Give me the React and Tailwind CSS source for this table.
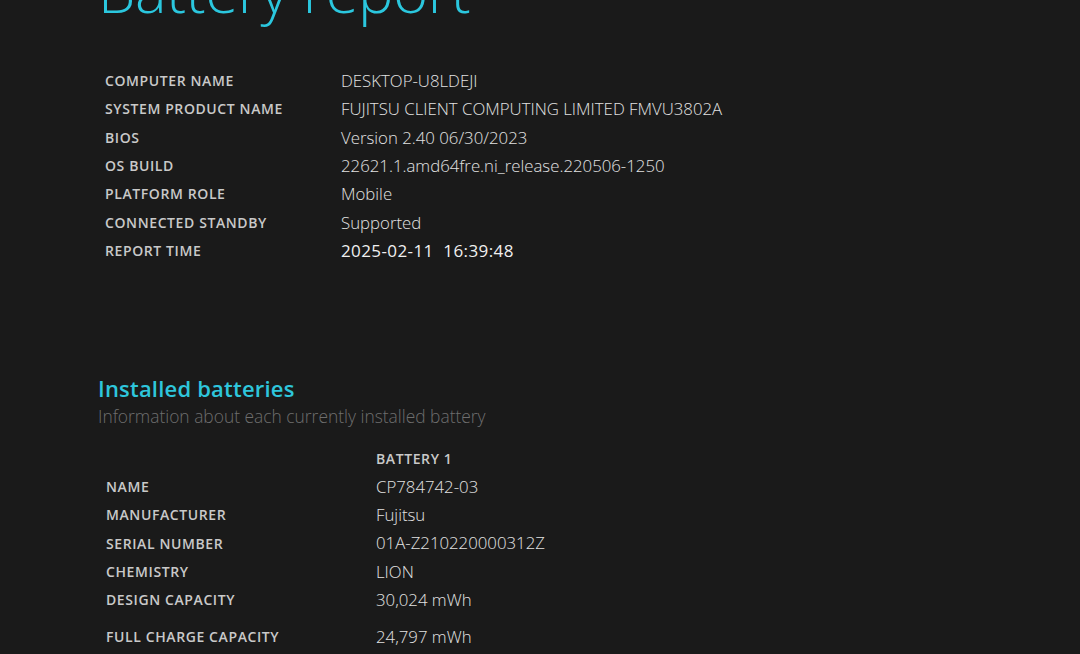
export default function App() {
  const info = [
    ["COMPUTER NAME", "DESKTOP-U8LDEJI"],
    ["SYSTEM PRODUCT NAME", "FUJITSU CLIENT COMPUTING LIMITED FMVU3802A"],
    ["BIOS", "Version 2.40 06/30/2023"],
    ["OS BUILD", "22621.1.amd64fre.ni_release.220506-1250"],
    ["PLATFORM ROLE", "Mobile"],
    ["CONNECTED STANDBY", "Supported"],
  ];
  const bat = [
    ["NAME", "CP784742-03"],
    ["MANUFACTURER", "Fujitsu"],
    ["SERIAL NUMBER", "01A-Z210220000312Z"],
    ["CHEMISTRY", "LION"],
    ["DESIGN CAPACITY", "30,024 mWh"],
  ];
  const lab = "text-[14px] font-semibold text-[#c9c9c9] tracking-[0.6px]";
  const val = "text-[16.8px] font-light text-[#e2e2e2]";
  return (
    <div className="w-[1080px] h-[654px] overflow-hidden bg-[#1a1a1a] font-['Open_Sans',sans-serif]">
      <div className="pl-[98px]">
        <h1 className="text-[59.5px] leading-[59.5px] font-light text-[#2bc7de] mt-[-40px] tracking-[-0.3px]">Battery report</h1>
        <div className="mt-[47px] pl-[7px] flex flex-col">
          {info.map(([k, v]) => (
            <div key={k} className="flex items-center h-[28.3px]">
              <div className={"w-[236px] " + lab}>{k}</div>
              <div className={val}>{v}</div>
            </div>
          ))}
          <div className="flex items-center h-[28.3px]">
            <div className={"w-[236px] " + lab}>REPORT TIME</div>
            <div className="text-[17px] font-medium text-[#f0f0f0] tracking-[0.4px] whitespace-pre">2025-02-11  16:39:48</div>
          </div>
        </div>
        <h2 className="mt-[109px] text-[22px] leading-[28px] font-semibold text-[#2ec6dc] tracking-[0.2px]">Installed batteries</h2>
        <p className="mt-[3px] text-[17.4px] leading-[22px] font-light text-[#6e6e6e]">Information about each currently installed battery</p>
        <div className="mt-[18px] pl-[8px] flex flex-col">
          <div className="flex items-center h-[28px]">
            <div className="w-[270px]"></div>
            <div className={lab}>BATTERY 1</div>
          </div>
          {bat.map(([k, v]) => (
            <div key={k} className="flex items-center h-[28.2px]">
              <div className={"w-[270px] " + lab}>{k}</div>
              <div className={val}>{v}</div>
            </div>
          ))}
          <div className="flex items-center h-[28.2px] mt-[9px]">
            <div className={"w-[270px] " + lab}>FULL CHARGE CAPACITY</div>
            <div className={val}>24,797 mWh</div>
          </div>
        </div>
      </div>
    </div>
  );
}
